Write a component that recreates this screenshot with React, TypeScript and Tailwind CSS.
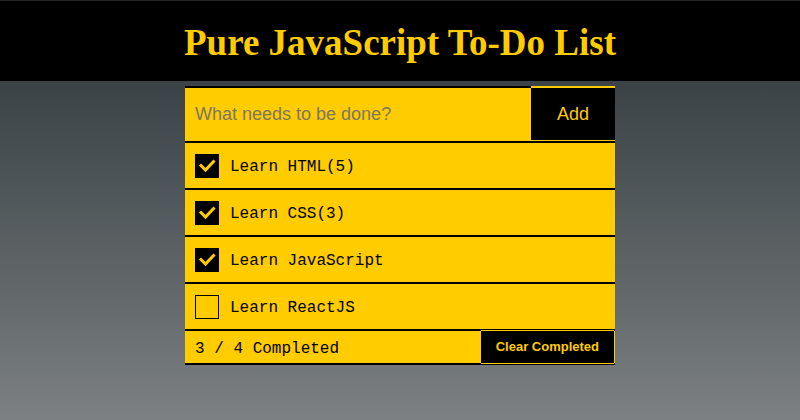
import { useState } from "react";

type Todo = { id: number; text: string; done: boolean };

const initialTodos: Todo[] = [
  { id: 1, text: "Learn HTML(5)", done: true },
  { id: 2, text: "Learn CSS(3)", done: true },
  { id: 3, text: "Learn JavaScript", done: true },
  { id: 4, text: "Learn ReactJS", done: false },
];

function CheckBox({ checked, onClick }: { checked: boolean; onClick: () => void }) {
  return (
    <button
      type="button"
      onClick={onClick}
      className={
        checked
          ? "w-[24px] h-[24px] shrink-0 bg-black flex items-center justify-center"
          : "w-[24px] h-[24px] shrink-0 border border-black bg-transparent"
      }
    >
      {checked && (
        <svg width="24" height="24" viewBox="0 0 24 24">
          <polyline
            points="6,11.5 10.5,16 18.5,7.5"
            fill="none"
            stroke="#ffcc00"
            strokeWidth="3"
            strokeLinecap="square"
          />
        </svg>
      )}
    </button>
  );
}

export default function App() {
  const [todos, setTodos] = useState<Todo[]>(initialTodos);
  const [text, setText] = useState("");

  const toggle = (id: number) =>
    setTodos((list) => list.map((t) => (t.id === id ? { ...t, done: !t.done } : t)));

  const add = () => {
    if (!text.trim()) return;
    setTodos((list) => [...list, { id: Date.now(), text: text.trim(), done: false }]);
    setText("");
  };

  const doneCount = todos.filter((t) => t.done).length;

  return (
    <div className="min-h-[420px] flex flex-col">
      <header className="h-[81px] bg-black border-t border-[#252525] flex items-center justify-center">
        <h1 className="text-[37px] font-bold text-[#ffcc00] font-['Liberation_Serif','Times_New_Roman',serif] leading-none pt-[2px]">
          Pure JavaScript To-Do List
        </h1>
      </header>

      <main className="flex-1 bg-gradient-to-b from-[#3b4346] to-[#7c8082] pt-[5px]">
        <div className="w-[430px] mx-auto bg-[#ffcc00]">
          <form
            className="flex h-[55px]"
            onSubmit={(e) => {
              e.preventDefault();
              add();
            }}
          >
            <input
              value={text}
              onChange={(e) => setText(e.target.value)}
              placeholder="What needs to be done?"
              className="flex-1 min-w-0 border-t-2 border-black bg-[#ffcc00] px-[10px] text-[18px] text-black placeholder:text-[#7d7764] outline-none font-['Liberation_Sans',Arial,sans-serif]"
            />
            <button
              type="submit"
              className="w-[84px] mt-[1px] border-y border-[#ffcc00] bg-black text-[#ffcc00] text-[18px] font-['Liberation_Sans',Arial,sans-serif]"
            >
              Add
            </button>
          </form>

          <ul className="font-['Liberation_Mono',monospace] text-[16px] text-black">
            {todos.map((t) => (
              <li key={t.id} className="h-[47px] border-t-2 border-black flex items-center gap-[11px] px-[10px]">
                <CheckBox checked={t.done} onClick={() => toggle(t.id)} />
                <span className="pt-[3px]">{t.text}</span>
              </li>
            ))}
          </ul>

          <div className="h-[36px] border-y-2 border-black flex items-center justify-between pl-[10px]">
            <span className="pt-[3px] font-['Liberation_Mono',monospace] text-[16px] text-black">
              {doneCount} / {todos.length} Completed
            </span>
            <button
              type="button"
              onClick={() => setTodos((list) => list.filter((t) => !t.done))}
              className="h-[34px] -my-[1px] mr-[1px] px-[15px] border-y border-[#ffcc00] bg-black text-[#ffcc00] text-[13px] font-bold font-['Liberation_Sans',Arial,sans-serif]"
            >
              Clear Completed
            </button>
          </div>
        </div>
      </main>
    </div>
  );
}
